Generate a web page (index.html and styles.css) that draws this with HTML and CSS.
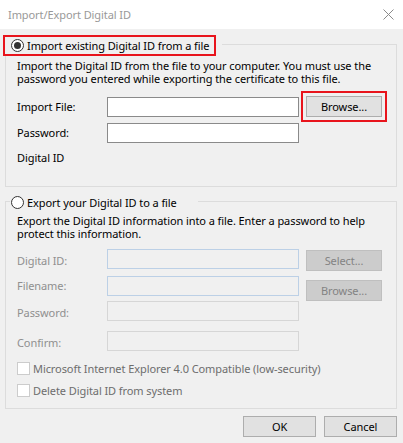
FILE: index.html
```html
<!DOCTYPE html>
<html>
<head>
<meta charset="utf-8">
<link rel="stylesheet" href="styles.css">
</head>
<body>
<div class="titlebar">
  <span class="title">Import/Export Digital ID</span>
  <svg class="close" viewBox="0 0 11 11" width="11" height="11"><path d="M0.5 0.5 L10.5 10.5 M10.5 0.5 L0.5 10.5" stroke="#8a8a8a" stroke-width="1" fill="none"/></svg>
</div>
<div class="content">
  <div class="group g1">
    <div class="legend legend1">
      <div class="hl">
        <span class="radio on"></span><span>Import existing Digital ID from a file</span>
      </div>
    </div>
    <p class="desc desc1">Import the Digital ID from the file to your computer. You must use the<br>password you entered while exporting the certificate to this file.</p>
    <div class="row r-import">
      <span class="lbl l-import">Import File:</span>
      <div class="input in-import"></div>
      <div class="hl-btn"><button class="btn">Browse...</button></div>
    </div>
    <div class="row r-pass1">
      <span class="lbl l-pass1">Password:</span>
      <div class="input"></div>
    </div>
    <div class="lbl l-digid">Digital ID</div>
  </div>

  <div class="group g2">
    <div class="legend legend2">
      <span class="radio"></span><span>Export your Digital ID to a file</span>
    </div>
    <p class="desc desc2">Export the Digital ID information into a file. Enter a password to help<br>protect this information.</p>
    <div class="row r-eid">
      <span class="lbl dis-lbl l-e">Digital ID:</span>
      <div class="input dis blue"></div>
      <button class="btn dis-btn b-select">Select...</button>
    </div>
    <div class="row r-fname">
      <span class="lbl dis-lbl l-f">Filename:</span>
      <div class="input dis blue"></div>
      <button class="btn dis-btn b-browse2">Browse...</button>
    </div>
    <div class="row r-epass">
      <span class="lbl dis-lbl l-e">Password:</span>
      <div class="input dis"></div>
    </div>
    <div class="row r-confirm">
      <span class="lbl dis-lbl l-e">Confirm:</span>
      <div class="input dis"></div>
    </div>
    <div class="check c1"><span class="box"></span><span>Microsoft Internet Explorer 4.0 Compatible (low-security)</span></div>
    <div class="check c2"><span class="box"></span><span>Delete Digital ID from system</span></div>
  </div>

  <div class="footer">
    <button class="btn fbtn">OK</button>
    <button class="btn fbtn">Cancel</button>
  </div>
</div>
</body>
</html>
```

FILE: styles.css
```css
* { box-sizing: border-box; margin: 0; padding: 0; }
html, body { width: 403px; height: 443px; overflow: hidden; }
body {
  background: #f0f0f0;
  font-family: "Noto Sans", sans-serif;
  font-size: 11px;
  letter-spacing: -0.08px;
  line-height: 13px;
  color: #000;
  white-space: nowrap;
}
.titlebar {
  height: 29px;
  background: #fff;
  display: flex;
  align-items: center;
  justify-content: space-between;
  padding: 0 9px 0 8px;
}
.title { color: #999; }
.close { display: block; }

.content { padding: 0 6px 0 5px; }

.group {
  border: 1px solid #dcdcdc;
  padding-left: 11px;
}
.g1 { margin-top: 15px; height: 143px; }
.g2 { margin-top: 14px; height: 208px; }

.legend {
  display: flex;
  align-items: center;
  background: #f0f0f0;
  width: max-content;
}
.legend1 { margin: -10px 0 0 -14px; padding-right: 6px; }
.hl {
  border: 2px solid #e8141c;
  height: 21px;
  display: flex;
  align-items: center;
  gap: 3px;
  padding: 0 5px 0 6px;
}
.legend2 {
  margin: -6px 0 0 -7px;
  padding-left: 1px;
  width: 188px;
  gap: 3px;
  height: 13px;
}

.radio {
  width: 13px;
  height: 13px;
  border: 1px solid #333;
  border-radius: 50%;
  background: #fff;
  display: flex;
  align-items: center;
  justify-content: center;
  flex: none;
}
.radio.on::after {
  content: "";
  width: 7px;
  height: 7px;
  border-radius: 50%;
  background: #333;
}

.desc1 { margin-top: 3px; }
.desc2 { margin-top: 5px; }

.row { display: flex; align-items: flex-start; }
.lbl { width: 90px; flex: none; }
.input {
  width: 192px;
  height: 20px;
  border: 1px solid #8a8a8a;
  background: #fff;
  flex: none;
}
.input.dis { background: #f0f0f0; border-color: #d6d6d6; }
.input.blue { border-color: #bcd0e6; }

.btn {
  width: 76px;
  height: 21px;
  background: #e1e1e1;
  border: 1px solid #adadad;
  font: inherit;
  letter-spacing: inherit;
  color: #000;
  flex: none;
}
.dis-btn { background: #cccccc; border-color: #bfbfbf; color: #838383; margin-left: 7px; }

.r-import { margin-top: 11px; }
.l-import { margin-top: 4px; }
.in-import { margin-top: 1px; }
.hl-btn {
  border: 2px solid #e8141c;
  padding: 3px;
  margin: -5px -5px -5px 2px;
  flex: none;
}
.hl-btn .btn { display: block; }

.r-pass1 { margin-top: 6px; }
.l-pass1 { margin-top: 3px; }
.l-digid { margin-top: 8px; }

.dis-lbl { color: #8f8f8f; }
.r-eid { margin-top: 9px; }
.l-e { margin-top: 5px; }
.l-f { margin-top: 3px; }
.b-select { margin-top: 1px; }
.r-fname { margin-top: 5px; }
.b-browse2 { margin-top: 4px; }
.r-confirm { margin-top: 10px; }

.check {
  display: flex;
  align-items: center;
  gap: 3px;
  color: #6d6d6d;
  height: 13px;
}
.box {
  width: 13px;
  height: 13px;
  border: 1px solid #cccccc;
  background: #fff;
  flex: none;
}
.c1 { margin-top: 11px; }
.c2 { margin-top: 9px; }

.footer {
  display: flex;
  justify-content: flex-end;
  gap: 8px;
  margin-top: 7px;
}
.fbtn { width: 73px; }
```
